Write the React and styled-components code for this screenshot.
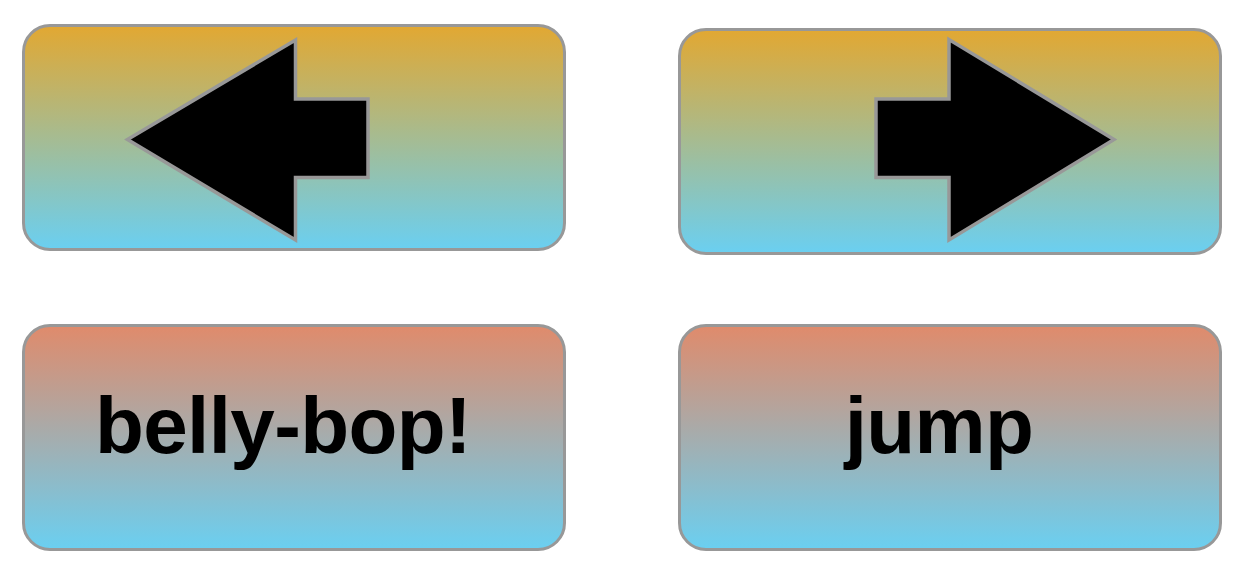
import React from "react";
import styled, { createGlobalStyle } from "styled-components";

const GlobalStyle = createGlobalStyle`
  html, body {
    margin: 0;
    padding: 0;
    background: #ffffff;
  }
  body {
    font-family: "Liberation Sans", Arial, sans-serif;
  }
`;

const ORANGE = "#e1a833";
const SALMON = "#df8b6c";
const SKY = "#6bcff0";

const Pad = styled.div`
  display: grid;
  grid-template-columns: 544px 544px;
  column-gap: 112px;
  row-gap: 69px;
  align-items: start;
  padding: 24px 0 0 22px;
`;

const GameButton = styled.button`
  box-sizing: border-box;
  display: flex;
  align-items: center;
  justify-content: center;
  width: 544px;
  height: 227px;
  margin: ${(p) => p.$offset || 0}px 0 0 0;
  padding: 0;
  border: 3px solid #989898;
  border-radius: 28px;
  background: linear-gradient(to bottom, ${(p) => p.$top}, ${SKY});
  cursor: pointer;
  overflow: visible;
`;

const ArrowSvg = styled.svg`
  display: block;
  width: 100%;
  height: 100%;
  overflow: visible;
`;

const Label = styled.span`
  padding: 0 22px 24px 0;
  font-family: "Liberation Sans", Arial, Helvetica, sans-serif;
  font-weight: 700;
  font-size: 80px;
  letter-spacing: -0.6px;
  line-height: 1;
  color: #000000;
`;

const Arrow = ({ points }) => (
  <ArrowSvg viewBox="0 0 538 221">
    <polygon
      points={points}
      fill="#000000"
      stroke="#989898"
      strokeWidth="3.5"
      strokeLinejoin="miter"
    />
  </ArrowSvg>
);

const LEFT_ARROW =
  "102.5,112.5 270.5,13 270.5,72 343,72 343,150.5 270.5,150.5 270.5,213";
const RIGHT_ARROW =
  "195,68 268,68 268,8.5 433,108.5 268,209 268,146.5 195,146.5";

export default function App() {
  return (
    <>
      <GlobalStyle />
      <Pad>
        <GameButton $top={ORANGE} aria-label="left">
          <Arrow points={LEFT_ARROW} />
        </GameButton>
        <GameButton $top={ORANGE} $offset={4} aria-label="right">
          <Arrow points={RIGHT_ARROW} />
        </GameButton>
        <GameButton $top={SALMON}>
          <Label>belly-bop!</Label>
        </GameButton>
        <GameButton $top={SALMON}>
          <Label>jump</Label>
        </GameButton>
      </Pad>
    </>
  );
}
